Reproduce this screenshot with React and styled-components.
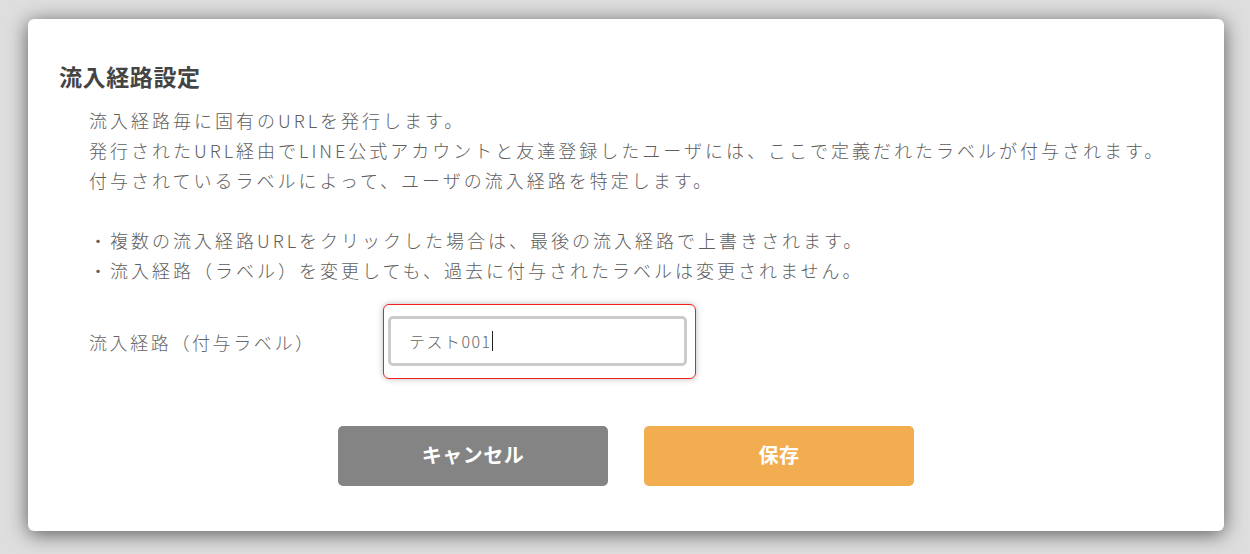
import React from "react";
import styled, { createGlobalStyle } from "styled-components";

const GlobalStyle = createGlobalStyle`
  html, body {
    margin: 0;
    padding: 0;
    background: #dedede;
  }
  body {
    font-family: "Noto Sans CJK JP", "Noto Sans", sans-serif;
  }
`;

const Page = styled.div`
  box-sizing: border-box;
  width: 1250px;
  height: 554px;
  padding: 19px 26px 23px 28px;
  background: #dedede;
`;

const Modal = styled.div`
  box-sizing: border-box;
  height: 512px;
  background: #fff;
  border-radius: 6px;
  box-shadow: 0 3px 20px rgba(0, 0, 0, 0.6);
  padding: 42px 31px 45px;
  display: flex;
  flex-direction: column;
`;

const Title = styled.h2`
  margin: 0;
  font-size: 23px;
  line-height: 30px;
  font-weight: 700;
  color: #444;
  letter-spacing: 0.6px;
`;

const Description = styled.div`
  margin: 14px 0 0 30px;
  font-size: 18px;
  line-height: 30px;
  font-weight: 300;
  letter-spacing: 3px;
  color: #5e5e5e;
`;

const Line = styled.p`
  margin: 0;
  min-height: 30px;
`;

const FormRow = styled.div`
  margin: 19px 0 0 30px;
  display: flex;
  align-items: center;
`;

const Label = styled.label`
  width: 294px;
  font-size: 18px;
  font-weight: 300;
  letter-spacing: 2.6px;
  color: #666;
`;

const FocusRing = styled.div`
  box-sizing: border-box;
  width: 313px;
  height: 75px;
  padding: 11px 8px 13px 4px;
  border: 1.5px solid #f21d1d;
  border-radius: 6px;
  box-shadow: 0 0 6px rgba(0, 0, 0, 0.28);
`;

const Field = styled.div`
  box-sizing: border-box;
  height: 50px;
  border: 3px solid #cbcbcb;
  border-radius: 5px;
  padding: 0 18px;
  display: flex;
  align-items: center;
  font-size: 16px;
  font-weight: 300;
  letter-spacing: 1.5px;
  color: #666;
`;

const Caret = styled.span`
  display: inline-block;
  width: 1.5px;
  height: 20px;
  background: #222;
`;

const Actions = styled.div`
  margin-top: 47px;
  display: flex;
  justify-content: center;
  gap: 36px;
`;

const Button = styled.button`
  width: 270px;
  height: 60px;
  border: none;
  border-radius: 5px;
  background: ${(props) => props.$bg};
  color: #fff;
  font-family: inherit;
  font-size: 20px;
  font-weight: 700;
  letter-spacing: 0.5px;
  padding: 0 0 3px;
  cursor: pointer;
`;

const App = () => {
  return (
    <>
      <GlobalStyle />
      <Page>
        <Modal>
          <Title>流入経路設定</Title>
          <Description>
            <Line>流入経路毎に固有のURLを発行します。</Line>
            <Line>
              発行されたURL経由でLINE公式アカウントと友達登録したユーザには、ここで定義だれたラベルが付与されます。
            </Line>
            <Line>付与されているラベルによって、ユーザの流入経路を特定します。</Line>
            <Line />
            <Line>・複数の流入経路URLをクリックした場合は、最後の流入経路で上書きされます。</Line>
            <Line>・流入経路（ラベル）を変更しても、過去に付与されたラベルは変更されません。</Line>
          </Description>
          <FormRow>
            <Label>流入経路（付与ラベル）</Label>
            <FocusRing>
              <Field>
                テスト001
                <Caret />
              </Field>
            </FocusRing>
          </FormRow>
          <Actions>
            <Button $bg="#848484">キャンセル</Button>
            <Button $bg="#f2ad50">保存</Button>
          </Actions>
        </Modal>
      </Page>
    </>
  );
};

export default App;
